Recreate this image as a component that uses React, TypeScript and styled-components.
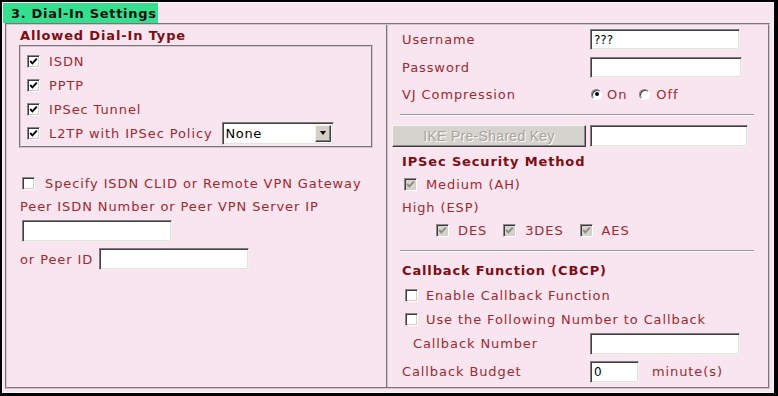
import React from "react";
import styled, { createGlobalStyle } from "styled-components";

const PINK = "#f8e5ef";
const LABEL = "#9d2a30";
const HEAD = "#7e0c14";

const Global = createGlobalStyle`
  html, body { margin: 0; padding: 0; background: #000; }
  body {
    font-family: "DejaVu Sans", Verdana, sans-serif;
    font-size: 13px;
    letter-spacing: 0.9px;
    color: ${LABEL};
  }
`;

const Frame = styled.div`
  margin: 2px 0 0 2px;
  width: 770px;
  height: 389px;
  background: ${PINK};
  border: 1px solid #fbf1f6;
  display: flex;
  flex-direction: column;
`;

const Tab = styled.div`
  width: 147px;
  height: 20px;
  padding-left: 8px;
  background: #34e08e;
  color: #111;
  font-weight: bold;
  letter-spacing: 0.7px;
  line-height: 21px;
  white-space: nowrap;
`;

const Table = styled.div`
  flex: 1;
  margin: 0 3px 3px 2px;
  border: 2px groove #cfc6cd;
  display: grid;
  grid-template-columns: 381px 1fr;
  min-height: 0;
`;

const LeftCol = styled.div`
  padding: 0 13px 0 12px;
  border-right: 2px groove #cfc6cd;
  display: flex;
  flex-direction: column;
`;

const RightCol = styled.div`
  padding: 0 14px 0 14px;
  display: flex;
  flex-direction: column;
`;

const Row = styled.div<{ $h: number; $indent?: number; $gap?: number; $top?: number }>`
  height: ${(p) => p.$h}px;
  flex: none;
  display: flex;
  align-items: center;
  padding-left: ${(p) => p.$indent ?? 0}px;
  margin-top: ${(p) => p.$top ?? 0}px;
  gap: ${(p) => p.$gap ?? 0}px;
  white-space: nowrap;
`;

const Heading = styled(Row)`
  font-weight: bold;
  letter-spacing: 0.85px;
  color: ${HEAD};
`;

const TypeBox = styled.div`
  border: 2px groove #cfc6cd;
  padding: 2px 0 1px 6px;
  display: flex;
  flex-direction: column;
`;

const Label = styled.span<{ $w?: number }>`
  display: inline-block;
  ${(p) => (p.$w ? `width: ${p.$w}px; flex: none;` : "")}
`;

const CheckBox = styled.span<{ $disabled?: boolean }>`
  box-sizing: border-box;
  width: 13px;
  height: 13px;
  flex: none;
  display: inline-flex;
  align-items: center;
  justify-content: center;
  background: ${(p) => (p.$disabled ? "#d6d2cc" : "#fff")};
  border: 1px solid;
  border-color: #8a8a8a #ffffff #ffffff #8a8a8a;
  box-shadow: inset 1px 1px 0 #3c3c3c, inset -1px -1px 0 #d4d0c8;
`;

const Check = ({ checked, disabled }: { checked?: boolean; disabled?: boolean }) => (
  <CheckBox $disabled={disabled}>
    {checked && (
      <svg width="9" height="9" viewBox="0 0 9 9">
        <path
          d="M1.2 4 L3.4 6.3 L7.8 1.6"
          fill="none"
          stroke={disabled ? "#8a8a8a" : "#000"}
          strokeWidth="1.9"
        />
      </svg>
    )}
  </CheckBox>
);

const RadioDot = styled.span<{ $on?: boolean }>`
  box-sizing: border-box;
  width: 11px;
  height: 11px;
  flex: none;
  border-radius: 50%;
  background: #fff;
  border: 1px solid;
  border-color: #808080 #ffffff #ffffff #808080;
  box-shadow: inset 1px 1px 0 #404040;
  display: inline-flex;
  align-items: center;
  justify-content: center;
  &::after {
    content: "";
    width: 4px;
    height: 4px;
    border-radius: 50%;
    background: ${(p) => (p.$on ? "#000" : "transparent")};
  }
`;

const Field = styled.div<{ $w: number; $h?: number; $left?: number }>`
  box-sizing: border-box;
  width: ${(p) => p.$w}px;
  height: ${(p) => p.$h ?? 22}px;
  flex: none;
  margin-left: ${(p) => p.$left ?? 0}px;
  background: #fff;
  border: 1px solid;
  border-color: #7e7e7e #f0f0f0 #f0f0f0 #7e7e7e;
  box-shadow: inset 1px 1px 0 #404040, inset -1px -1px 0 #e6e2dc;
  font-family: "DejaVu Sans", Verdana, sans-serif;
  font-size: 12px;
  letter-spacing: 0;
  color: #000;
  padding: 0 3px;
  display: flex;
  align-items: center;
`;

const SelectBox = styled(Field)`
  padding: 0 2px 0 3px;
  font-size: 13px;
  letter-spacing: 0.6px;
  justify-content: space-between;
`;

const DropBtn = styled.span`
  box-sizing: border-box;
  width: 16px;
  height: 17px;
  background: #d4d0c8;
  border: 1px solid;
  border-color: #f4f2ee #404040 #404040 #f4f2ee;
  box-shadow: inset -1px -1px 0 #808080;
  display: inline-flex;
  align-items: center;
  justify-content: center;
  &::after {
    content: "";
    border-left: 3.5px solid transparent;
    border-right: 3.5px solid transparent;
    border-top: 4px solid #000;
  }
`;

const KeyButton = styled.div`
  box-sizing: border-box;
  width: 194px;
  height: 22px;
  flex: none;
  margin-left: -10px;
  margin-right: 4px;
  background: #d6d3ce;
  border: 1px solid;
  border-color: #f6f4f0 #3c3c3c #3c3c3c #f6f4f0;
  box-shadow: inset -1px -1px 0 #8a8a8a;
  font-family: "Liberation Sans", Arial, sans-serif;
  font-size: 14px;
  letter-spacing: 0.3px;
  color: #a7a39d;
  text-shadow: 1px 1px 0 #ffffff;
  display: flex;
  align-items: center;
  justify-content: center;
`;

const Rule = styled.div<{ $top: number; $bottom: number }>`
  height: 0;
  flex: none;
  margin: ${(p) => p.$top}px 0 ${(p) => p.$bottom}px -2px;
  border-top: 1px solid #9c979b;
  border-bottom: 1px solid #ffffff;
`;

const OptGroup = styled.span<{ $gap?: number; $left?: number }>`
  display: inline-flex;
  align-items: center;
  gap: ${(p) => p.$gap ?? 9}px;
  margin-left: ${(p) => p.$left ?? 0}px;
`;

export default function App() {
  return (
    <>
      <Global />
      <Frame>
        <Tab>3. Dial-In Settings</Tab>
        <Table>
          <LeftCol>
            <Heading $h={20} $indent={1}>Allowed Dial-In Type</Heading>
            <TypeBox>
              <Row $h={24} $gap={9}>
                <Check checked />
                <Label>ISDN</Label>
              </Row>
              <Row $h={24} $gap={9}>
                <Check checked />
                <Label>PPTP</Label>
              </Row>
              <Row $h={24} $gap={9}>
                <Check checked />
                <Label>IPSec Tunnel</Label>
              </Row>
              <Row $h={24} $gap={9}>
                <Check checked />
                <Label>L2TP with IPSec Policy</Label>
                <SelectBox $w={112} $h={23} $left={0}>
                  <span>None</span>
                  <DropBtn />
                </SelectBox>
              </Row>
            </TypeBox>
            <Row $h={24} $top={23} $indent={3} $gap={10}>
              <Check />
              <Label>Specify ISDN CLID or Remote VPN Gateway</Label>
            </Row>
            <Row $h={22} $indent={1}>
              <Label>Peer ISDN Number or Peer VPN Server IP</Label>
            </Row>
            <Row $h={27} $indent={3}>
              <Field $w={150} />
            </Row>
            <Row $h={30} $indent={1} $gap={6}>
              <Label>or Peer ID</Label>
              <Field $w={150} />
            </Row>
          </LeftCol>

          <RightCol>
            <Row $h={29}>
              <Label $w={188}>Username</Label>
              <Field $w={150} $h={21}>???</Field>
            </Row>
            <Row $h={27}>
              <Label $w={188}>Password</Label>
              <Field $w={152} $h={21} />
            </Row>
            <Row $h={26}>
              <Label $w={189}>VJ Compression</Label>
              <OptGroup $gap={5}>
                <RadioDot $on />
                <Label>On</Label>
              </OptGroup>
              <OptGroup $gap={6} $left={12}>
                <RadioDot />
                <Label>Off</Label>
              </OptGroup>
            </Row>
            <Rule $top={7} $bottom={5} />
            <Row $h={29}>
              <KeyButton>IKE Pre-Shared Key</KeyButton>
              <Field $w={158} />
            </Row>
            <Heading $h={22}>IPSec Security Method</Heading>
            <Row $h={24} $indent={2} $gap={9}>
              <Check checked disabled />
              <Label>Medium (AH)</Label>
            </Row>
            <Row $h={22}>
              <Label>High (ESP)</Label>
            </Row>
            <Row $h={24} $indent={34} $gap={16}>
              <OptGroup>
                <Check checked disabled />
                <Label>DES</Label>
              </OptGroup>
              <OptGroup>
                <Check checked disabled />
                <Label>3DES</Label>
              </OptGroup>
              <OptGroup>
                <Check checked disabled />
                <Label>AES</Label>
              </OptGroup>
            </Row>
            <Rule $top={8} $bottom={6} />
            <Heading $h={25}>Callback Function (CBCP)</Heading>
            <Row $h={24} $indent={3} $gap={8}>
              <Check />
              <Label>Enable Callback Function</Label>
            </Row>
            <Row $h={24} $indent={3} $gap={8}>
              <Check />
              <Label>Use the Following Number to Callback</Label>
            </Row>
            <Row $h={25} $indent={11}>
              <Label $w={177}>Callback Number</Label>
              <Field $w={150} />
            </Row>
            <Row $h={31} $gap={13}>
              <Label $w={175}>Callback Budget</Label>
              <Field $w={49}>0</Field>
              <Label>minute(s)</Label>
            </Row>
          </RightCol>
        </Table>
      </Frame>
    </>
  );
}
